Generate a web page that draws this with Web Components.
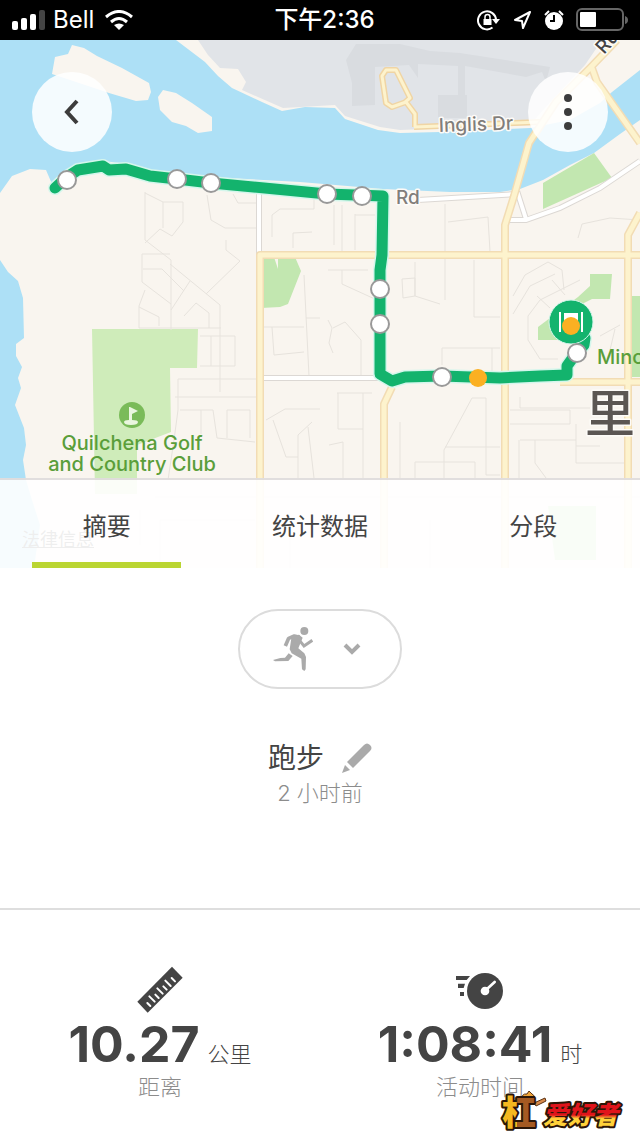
<!DOCTYPE html>
<html lang="zh-CN">
<head>
<meta charset="utf-8">
<meta name="viewport" content="width=device-width, initial-scale=1">
<title>跑步</title>
<style>
    * { box-sizing: border-box; }

    body {
        margin: 0;
        min-height: 100vh;
        background: #fff;
        color: #444;
        font-family: Inter, "Noto Sans CJK SC", sans-serif;
    }
</style>
</head>
<body>
<workout-page></workout-page>

<script>
const baseStyle = `
    * { box-sizing: border-box; }
    svg { display: block; flex: none; }
    button { margin: 0; padding: 0; border: 0; background: none; font: inherit; color: inherit; cursor: pointer; }
`;

const define = (name, html) => {
    customElements.define(name, class extends HTMLElement {
        constructor() {
            super();
            this.attachShadow({ mode: 'open' });
            this.shadowRoot.innerHTML = `<style>${baseStyle}</style>${html}`;
        }
    });
};

// Status bar
define('status-bar', `
    <style>
        :host {
            display: grid;
            grid-template-columns: 1fr auto 1fr;
            align-items: center;
            height: 40px;
            padding: 0 11px 0 12px;
            background: #000;
            color: #fff;
            font-size: 24px;
            line-height: 40px;
        }
        .side { display: flex; align-items: center; gap: 8px; }
        .left { gap: 8px; }
        .right { justify-content: flex-end; gap: 12px; }
        .time { font-weight: 500; padding-left: 8px; }
    </style>
    <div class="side left">
        <svg width="33" height="20" viewBox="0 0 33 20" fill="#fff">
            <rect x="0" y="11" width="6" height="9" rx="2"/>
            <rect x="9" y="8" width="6" height="12" rx="2"/>
            <rect x="18" y="4" width="6" height="16" rx="2"/>
            <rect x="27" y="0" width="6" height="20" rx="2" fill="#444"/>
        </svg>
        <span>Bell</span>
        <svg width="32" height="20" viewBox="0 0 32 20" fill="none" stroke="#fff" stroke-width="3">
            <path d="M4 7 Q17 -4 30 7"/>
            <path d="M9 12 Q17 5 25 12"/>
            <path d="M12 15 Q17 12 22 15 L17 20Z" fill="#fff" stroke="none"/>
        </svg>
    </div>
    <span class="time">下午2:36</span>
    <div class="side right">
        <svg width="24" height="22" viewBox="0 0 48 44" fill="none" stroke="#fff" stroke-width="4">
            <path d="M31 37 A18 18 0 1 1 38 22"/>
            <path d="M30 20h16l-8 10z" fill="#fff" stroke="none"/>
            <rect x="13" y="20" width="16" height="12" fill="#fff" stroke="none"/>
            <path d="M16 20V16a5 5 0 0 1 10 0v4" stroke-width="3"/>
        </svg>
        <svg width="19" height="20" viewBox="0 0 19 20" fill="none" stroke="#fff" stroke-width="2" stroke-linejoin="round">
            <path d="M17 2 L2 10 L9 11 L10 18Z"/>
        </svg>
        <svg width="20" height="20" viewBox="0 0 20 20">
            <circle cx="10" cy="11" r="9" fill="#fff"/>
            <path d="M10 5v6H6" fill="none" stroke="#000" stroke-width="2"/>
            <path d="M1 5 L5 1 M15 1 L19 5" stroke="#fff" stroke-width="2"/>
        </svg>
        <svg width="53" height="24" viewBox="0 0 53 24">
            <rect x="1" y="1" width="46" height="21" rx="5" fill="none" stroke="#666" stroke-width="2"/>
            <rect x="4" y="4" width="16" height="15" rx="1" fill="#fff"/>
            <path d="M49 8 Q52 9 52 12 T49 16Z" fill="#666"/>
        </svg>
    </div>
`);

// Route map
define('route-map', `
    <style>
        :host { display: block; background: #f9f5ef; }
        svg { width: 100%; height: auto; }
        .minor path { fill: none; stroke: #e7e3dd; stroke-width: 1; }
        .white-case { fill: none; stroke: #dcd8d4; stroke-width: 6; }
        .white { fill: none; stroke: #fff; stroke-width: 4; }
        .road-case { fill: none; stroke: #f2dcb4; stroke-width: 8; stroke-linejoin: round; }
        .road { fill: none; stroke: #fdf3cd; stroke-width: 5; stroke-linejoin: round; }
        .thin-case { fill: none; stroke: #f0d5a4; stroke-width: 6; stroke-linejoin: round; }
        .thin { fill: none; stroke: #fdf3cd; stroke-width: 3; stroke-linejoin: round; }
        .street, .city { font-weight: 500; paint-order: stroke; stroke: #fdfbf8; stroke-width: 3px; stroke-linejoin: round; }
        .street { font-size: 19px; fill: #817e7b; }
        .place { font-size: 20px; font-weight: 500; fill: #5a9e3a; }
        .city { font-size: 50px; fill: #5b5653; }
        .stop { fill: #fff; stroke: #999; stroke-width: 2; }
    </style>
    <svg viewBox="0 40 640 528" role="img" aria-label="路线地图">
        <rect y="40" width="640" height="528" fill="#f9f5ef"/>
        <path fill="#ade0f6" d="M0 40H176L205 62L218 76L232 88L262 102L282 111L305 107L335 108L345 119L360 124L378 130L400 133L440 132L530 128L570 120L600 103L612 92L640 70V120L620 134L594 153L570 165L543 180L520 189L500 192L450 192L383 189L300 182L211 177L150 171L128 164L103 161L78 165L60 176L52 184L46 170L30 169L12 176L0 193Z"/>
        <path fill="#ade0f6" d="M0 260L8 272L18 281L23 298L24 338L16 344L16 356L22 367L18 378L21 388L15 405L24 428L26 445L23 460L26 480L32 500L40 525L34 568H0Z"/>
        <path fill="#f9f5ef" d="M72 45L84 48L97 56L122 68L149 83L151 92L148 100L136 101L109 93L52 74L55 57L68 54ZM163 90L176 93L192 103L212 117L212 131L198 133L186 126L172 122L160 110L158 97Z"/>
        <path fill="#e1e4e8" d="M198 40L208 55L220 68L238 69L246 82L242 90L283 108L335 105L345 116L380 127L400 130L530 125L545 108L585 65L602 40Z"/>
        <path fill="#d9dce0" d="M356 44H400L430 51L460 53L550 67L546 82L542 72L526 77L465 66V95H467V118H438V95H458V66L418 64V78L409 65L375 67V105L352 106V83L346 60Z"/>
        <path fill="#cfecba" d="M92 329H198L197 368H170L171 432L137 445V494H95Z"/>
        <g fill="#c2e7b0">
            <path d="M261 257H274L278 269V257H295L301 271L288 304L280 307L261 308Z"/>
            <path d="M543 183L594 153L612 178L543 209Z"/>
            <path d="M590 274H612L610 299H592L570 310L560 340H538V327L578 297L590 286Z"/>
            <path d="M632 296H640V377H632ZM548 506H596V560H555Z"/>
        </g>
        <g class="minor">
            <path d="M145 192V240L171 260V330M145 193L163 202H183V222L172 236L160 229L145 243M163 202V228M207 195L211 220L225 228H258M233 194L238 203H256M272 237V215L280 209H314V195M293 248V233L312 232"/>
            <path d="M142 254H170M142 254V282L171 304M143 269H162L184 291M170 264L220 305V392M145 290L139 306V328M139 307L159 317V326M184 316L196 303L209 313V328M171 310L190 281M139 328H221M200 336H235V366H200M211 336V366M206 294L240 261L226 250V240"/>
            <path d="M178 379H258M175 397H258M178 379V410L174 440L168 480M180 410H213L217 438L255 442M201 410V434M227 410V438M227 410H250V438"/>
            <path d="M264 327H304M272 327L274 355L304 352M304 275L309 376M306 318H320M266 420L285 409H320M273 420L286 457H298M298 478V435L312 422M308 427L314 478"/>
            <path d="M334 205V245M342 205V252M355 214V250M355 215H375M445 204V300M448 222L488 217L490 252M328 270H368M342 270V284L377 300M328 320L332 328L329 343L333 353M333 328L345 322L361 340V378"/>
            <path d="M402 279L415 278V296L403 298ZM415 262V296L440 304M474 260V317H500M442 365V348H500M492 348V378M337 393H372M338 393V429H363M363 393V478M329 445L343 442V478M400 422V478"/>
            <path d="M472 398L444 450V478M472 398H486V475H500M445 447H500M415 478V462H475V478M520 397V408H590M510 410H570V424H510M520 440H576M535 440V463L546 478M519 440V478M576 424V463H625M576 446H600"/>
            <path d="M513 296L525 275L548 262L562 270L564 290M513 314L530 286L555 274M528 340V316L540 300L580 280M528 340L540 359H558M537 296L550 308M552 280L565 295M600 336L620 325M610 350L615 329M578 238L582 224L610 218L640 220"/>
            <path d="M155 497H640M140 510V545M160 568V520H255M290 520V568M430 520V568"/>
        </g>
        <path class="white-case" d="M259 192V255M260 378H380M418 200L518 194L526 219M508 220H526L560 208L600 188L640 161"/>
        <path class="white" d="M259 192V255M260 378H380M418 200L518 194L526 219M508 220H526L560 208L600 188L640 161"/>
        <path class="thin-case" d="M414 127L540 122M415 127V114L406 102L392 107L386 103L382 76L386 70H396L410 98L404 103"/>
        <path class="thin" d="M414 127L540 122M415 127V114L406 102L392 107L386 103L382 76L386 70H396L410 98L404 103"/>
        <path class="road-case" d="M260 568V255H640M384 568V404L392 387M505 568V225L514 196L529 143L556 102L590 68L617 40M592 68L597 82L640 143M628 568V235L640 213M560 382H640"/>
        <path class="road" d="M260 568V255H640M384 568V404L392 387M505 568V225L514 196L529 143L556 102L590 68L617 40M592 68L597 82L640 143M628 568V235L640 213M560 382H640"/>

        <circle cx="132" cy="415" r="13" fill="#7abb59"/>
        <path fill="#eaf6df" d="M130 407l8 4-6 3v6q6 0 6 2 0 3-7 3t-7-3q0-2 5-2v-13z"/>
        <text class="place" x="132" y="450" text-anchor="middle">Quilchena Golf</text>
        <text class="place" x="132" y="471" text-anchor="middle">and Country Club</text>
        <text class="place" x="597" y="364">Mino</text>
        <text class="street" x="439" y="132" transform="rotate(-2 439 132)">Inglis Dr</text>
        <text class="street" x="396" y="204">Rd</text>
        <text class="street" x="604" y="55" transform="rotate(-48 604 55)" style="fill: #444">Ru</text>
        <text class="city" x="585" y="432">里</text>

        <g fill="none" stroke-linecap="round" stroke-linejoin="round">
            <path stroke="#d5f6ec" stroke-width="14" d="M55 188L67 177L78 170L103 166L109 170L126 169L150 176L177 179L211 183L327 194L383 196L382 255L380 270V374L392 381L405 377L442 376L500 378L540 376L567 375V366L577 352L584 345L585 338"/>
            <path stroke="#13b36d" stroke-width="11" d="M55 188L67 177L78 170L103 166L109 170L126 169L150 176L177 179L211 183L327 194L383 196L382 255L380 270V374L392 381L405 377L442 376L500 378L540 376L567 375V366L577 352L584 345L585 338"/>
        </g>
        <circle cx="571" cy="322" r="22" fill="#13b36d" stroke="#d5f6ec"/>
        <path d="M560 312V332M582 312V332" stroke="#fff" stroke-width="2"/>
        <path d="M564 313H578V326H564Z" fill="#fff"/>
        <g class="stop">
            <circle cx="67" cy="180" r="9"/>
            <circle cx="177" cy="179" r="9"/>
            <circle cx="211" cy="183" r="9"/>
            <circle cx="327" cy="194" r="9"/>
            <circle cx="362" cy="196" r="9"/>
            <circle cx="380" cy="289" r="9"/>
            <circle cx="380" cy="324" r="9"/>
            <circle cx="442" cy="377" r="9"/>
            <circle cx="577" cy="353" r="9"/>
        </g>
        <g fill="#fbb022">
            <circle cx="478" cy="378" r="9"/>
            <circle cx="571" cy="326" r="9"/>
        </g>
    </svg>
`);

define('round-button', `
    <style>
        :host { display: block; }
        button { display: grid; place-items: center; width: 80px; height: 80px; border-radius: 50%; background: rgba(255, 255, 255, 0.86); }
    </style>
    <button type="button"><slot></slot></button>
`);

class TabBar extends HTMLElement {
    constructor() {
        super();
        this.attachShadow({ mode: 'open' });
    }

    connectedCallback() {
        const tabs = this.getAttribute('tabs').split(',');

        this.shadowRoot.innerHTML = `
            <style>
                ${baseStyle}
                :host { display: block; border-top: 2px solid rgba(205, 200, 200, 0.6); background: rgba(255, 255, 255, 0.9); }
                .tabs { display: grid; grid-template-columns: repeat(3, 1fr); }
                button { margin: 0 32px; height: 88px; padding-top: 6px; border-bottom: 6px solid transparent; font-size: 24px; white-space: nowrap; color: #444; }
                button[aria-selected="true"] { border-color: #bad532; }
            </style>
            <div class="tabs" role="tablist">
                ${tabs.map((tab, i) => `<button type="button" role="tab" aria-selected="${i === 0}">${tab}</button>`).join('')}
            </div>
        `;

        const buttons = this.shadowRoot.querySelectorAll('button');
        buttons.forEach((button) => {
            button.addEventListener('click', () => {
                buttons.forEach((b) => b.setAttribute('aria-selected', b === button));
            });
        });
    }
}

customElements.define('tab-bar', TabBar);

// Map with the controls that float over it
define('map-header', `
    <style>
        :host { display: grid; }
        :host > * { grid-area: 1 / 1; }
        route-map, .legal, .actions, tab-bar { grid-area: 1 / 1; }
        .actions { display: flex; justify-content: space-between; align-self: start; padding: 32px; }
        .legal { align-self: end; justify-self: start; margin: 0 22px 16px; font-size: 18px; line-height: 24px; color: #555; }
        tab-bar { align-self: end; }
    </style>
    <route-map></route-map>
    <a class="legal" href="#legal">法律信息</a>
    <div class="actions">
        <round-button aria-label="返回">
            <svg width="16" height="26" viewBox="0 0 16 26" fill="none" stroke="#3c3c3c" stroke-width="4">
                <path d="M13 2 L3 13 L13 24"/>
            </svg>
        </round-button>
        <round-button aria-label="更多">
            <svg width="8" height="36" viewBox="0 0 8 36" fill="#3c3c3c">
                <circle cx="4" cy="4" r="4"/>
                <circle cx="4" cy="18" r="4"/>
                <circle cx="4" cy="32" r="4"/>
            </svg>
        </round-button>
    </div>
    <tab-bar tabs="摘要,统计数据,分段"></tab-bar>
`);

define('activity-summary', `
    <style>
        :host {
            display: flex;
            flex-direction: column;
            align-items: center;
            padding: 41px 32px 100px;
            border-bottom: 2px solid #dedede;
        }
        .type {
            display: flex;
            align-items: center;
            justify-content: center;
            gap: 30px;
            width: 164px;
            height: 80px;
            padding-right: 6px;
            border: 2px solid #dcdcdc;
            border-radius: 40px;
        }
        .title { display: flex; align-items: center; gap: 18px; margin-top: 49px; }
        h1 { margin: 0; font-size: 28px; line-height: 40px; font-weight: 400; }
        p { margin: 0; font-size: 22px; line-height: 30px; font-weight: 300; color: #8c8c8c; }
    </style>
    <button class="type" type="button" aria-label="活动类型" aria-haspopup="listbox">
        <svg width="40" height="46" viewBox="158 78 120 138" fill="none" stroke="#aaa">
            <circle cx="252" cy="93" r="12" fill="#aaa" stroke="none"/>
            <path d="M195 138L205 115L222 108L238 112" stroke-width="11" stroke-linejoin="round"/>
            <path d="M214 108L236 104L247 113L234 145L252 160L257 171L256 208L252 213L245 208L243 176L214 160L208 148Z" fill="#aaa" stroke="none"/>
            <path d="M238 122L251 138L276 121" stroke-width="9"/>
            <path d="M158 180L180 174L194 173L205 160L217 168L204 183L164 184Z" fill="#aaa" stroke="none"/>
        </svg>
        <svg width="18" height="14" viewBox="0 0 18 14" fill="none" stroke="#aaa" stroke-width="4">
            <path d="M2 3 L9 10 L16 3"/>
        </svg>
    </button>
    <div class="title">
        <h1>跑步</h1>
        <button type="button" aria-label="编辑">
            <svg width="30" height="30" viewBox="0 0 30 30" fill="#aaa">
                <path d="M5 19L22 2Q25 -1 28 2Q31 5 28 8L11 25Z"/>
                <path d="M3 22L8 27L0 30Z"/>
            </svg>
        </button>
    </div>
    <p>2 小时前</p>
`);

define('stat-card', `
    <style>
        :host { display: flex; flex-direction: column; align-items: center; }
        .value { display: flex; align-items: baseline; gap: 8px; height: 60px; line-height: 60px; white-space: nowrap; }
        .number { font-size: 50px; font-weight: 700; }
        .unit { font-size: 22px; font-weight: 300; }
        .label { font-size: 22px; line-height: 26px; font-weight: 300; color: #8c8c8c; }
    </style>
    <slot name="icon"></slot>
    <div class="value">
        <span class="number"><slot name="number"></slot></span>
        <span class="unit"><slot name="unit"></slot></span>
    </div>
    <div class="label"><slot></slot></div>
`);

define('site-badge', `
    <style>
        :host { display: block; }
        text { font-weight: 900; paint-order: stroke; stroke: #2b1608; stroke-width: 4px; stroke-linejoin: round; }
        .name { font-style: italic; }
    </style>
    <svg width="128" height="44" viewBox="0 0 128 44">
        <defs>
            <linearGradient id="wood">
                <stop offset="0.45" stop-color="#f5b81f"/>
                <stop offset="0.45" stop-color="#a55a22"/>
            </linearGradient>
            <linearGradient id="fire" x2="0" y2="1">
                <stop offset="0.5" stop-color="#e0141b"/>
                <stop offset="0.62" stop-color="#ffd23a"/>
            </linearGradient>
        </defs>
        <path d="M25 14Q25 5 31 6L33 3L36 6Q40 8 38 14Z" fill="#f0a63a" stroke="#5b3212"/>
        <path d="M38 15L49 10L50 13L40 18Z" fill="#d98a4a" stroke="#5b3212"/>
        <text x="6" y="37" font-size="34" fill="url(#wood)">杠</text>
        <text class="name" x="47" y="36" font-size="25" fill="url(#fire)">爱好者</text>
    </svg>
`);

define('workout-page', `
    <style>
        :host { display: flex; flex-direction: column; position: relative; min-height: 100vh; }
        .stats { display: grid; grid-template-columns: 1fr 1fr; padding: 56px 0 32px; }
        site-badge { position: absolute; right: 16px; bottom: 4px; }
    </style>
    <status-bar></status-bar>
    <map-header></map-header>
    <activity-summary></activity-summary>
    <section class="stats">
        <stat-card>
            <svg slot="icon" width="48" height="48" viewBox="292 48 144 144">
                <path fill="#444" d="M296 155L400 50L432 83L327 188Z"/>
                <path stroke="#fff" stroke-width="6" stroke-linecap="round" d="M326 159L335 168M332 139L348 155M350 134L360 144M356 115L372 131M374 109L384 119M380 92L396 108M399 84L409 94"/>
            </svg>
            <span slot="number">10.27</span>
            <span slot="unit">公里</span>
            距离
        </stat-card>
        <stat-card>
            <svg slot="icon" width="48" height="48" viewBox="288 48 144 144">
                <circle cx="375" cy="123" r="54" fill="#444"/>
                <path fill="#444" d="M288 78H330L320 90H288ZM294 101H315L311 114H294ZM300 126H312V138H300Z"/>
                <circle cx="375" cy="123" r="13" fill="#fff"/>
                <path stroke="#fff" stroke-width="8" stroke-linecap="round" d="M377 121L404 96"/>
            </svg>
            <span slot="number">1:08:41</span>
            <span slot="unit">时</span>
            活动时间
        </stat-card>
    </section>
    <site-badge></site-badge>
`);
</script>
</body>
</html>
